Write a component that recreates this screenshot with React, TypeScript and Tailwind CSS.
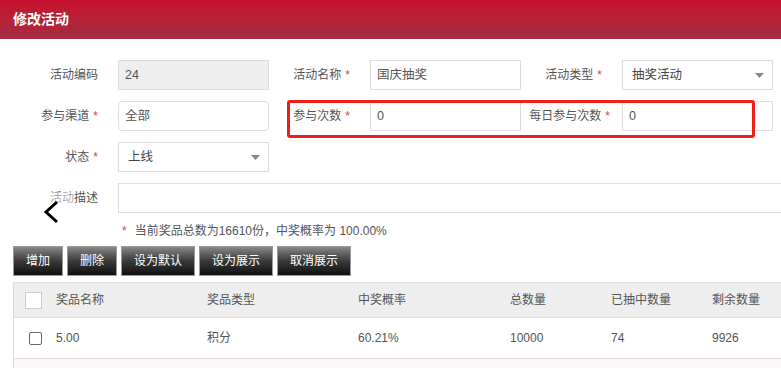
import React from "react";

const FONT = { fontFamily: '"Liberation Sans", "Noto Sans CJK SC", sans-serif' };

function Star() {
  return <span className="text-[#e4393c] ml-[4px]">*</span>;
}

function Label({ text, star, w = "w-[101px]", pr = "pr-[20px]" }: { text: string; star?: boolean; w?: string; pr?: string }) {
  return (
    <div className={`${w} ${pr} shrink-0 text-right text-[12px] text-[#555] leading-[30px] whitespace-nowrap`}>
      {text}
      {star && <Star />}
    </div>
  );
}

function Input({ value, gray, rounded }: { value: string; gray?: boolean; rounded?: boolean }) {
  return (
    <div
      className={`w-[151px] h-[30px] shrink-0 border border-[#ddd] pl-[6px] text-[12.5px] text-[#555] leading-[28px] ${
        gray ? "bg-[#eee]" : "bg-white"
      } ${rounded ? "rounded-[4px] border-[#d6d6d6]" : ""}`}
    >
      {value}
    </div>
  );
}

function Select({ value }: { value: string }) {
  return (
    <div className="relative w-[151px] h-[30px] shrink-0 border border-[#ddd] bg-white pl-[9px] text-[12.5px] text-[#444] leading-[28px]">
      {value}
      <svg className="absolute right-[8px] top-[12px]" width="9" height="5" viewBox="0 0 9 5">
        <polygon points="0,0 9,0 4.5,5" fill="#888" />
      </svg>
    </div>
  );
}

function Btn({ text, wide }: { text: string; wide?: boolean }) {
  return (
    <div
      className={`${wide ? "w-[74px]" : "w-[50px]"} h-[30px] border border-[#9a9a9a] bg-gradient-to-b from-[#888] via-[#3a3a3a] to-[#111] text-white text-[12px] leading-[28px] text-center`}
    >
      {text}
    </div>
  );
}

export default function App() {
  const cols = ["w-[151px]", "w-[151px]", "w-[152px]", "w-[101px]", "w-[101px]", "w-[101px]"];
  const head = ["奖品名称", "奖品类型", "中奖概率", "总数量", "已抽中数量", "剩余数量"];
  const row = ["5.00", "积分", "60.21%", "10000", "74", "9926"];
  return (
    <div className="relative w-[781px] h-[368px] overflow-hidden bg-white" style={FONT}>
      <div className="h-[39px] bg-gradient-to-b from-[#c8102e] to-[#a42a40] flex items-center pl-[13px]">
        <span className="text-white text-[14px] font-bold">修改活动</span>
      </div>

      <div className="pt-[21px] flex flex-col gap-[11px]">
        <div className="flex items-center h-[30px]">
          <Label text="活动编码" w="w-[118px]" />
          <Input value="24" gray />
          <Label text="活动名称" star />
          <Input value="国庆抽奖" />
          <Label text="活动类型" star />
          <Select value="抽奖活动" />
        </div>
        <div className="flex items-center h-[30px]">
          <Label text="参与渠道" star w="w-[118px]" />
          <Input value="全部" rounded />
          <Label text="参与次数" star />
          <Input value="0" />
          <Label text="每日参与次数" star pr="pr-[12px]" />
          <Input value="0" />
        </div>
        <div className="flex items-center h-[30px]">
          <Label text="状态" star w="w-[118px]" />
          <Select value="上线" />
        </div>
        <div className="flex items-center h-[30px]">
          <Label text="活动描述" w="w-[118px]" />
          <div className="w-[700px] h-[30px] shrink-0 border border-[#ddd] bg-white" />
        </div>
      </div>

      <div className="mt-[8px] h-[20px] pl-[122px] flex items-center text-[12px] text-[#555] whitespace-nowrap">
        <span className="text-[#e4393c] mr-[8px]">*</span>
        当前奖品总数为16610份，中奖概率为 100.00%
      </div>

      <div className="mt-[5px] ml-[13px] flex gap-[4px]">
        <Btn text="增加" />
        <Btn text="删除" />
        <Btn text="设为默认" wide />
        <Btn text="设为展示" wide />
        <Btn text="取消展示" wide />
      </div>

      <div className="mt-[6px] ml-[13px] w-[900px] border-l border-t border-[#ddd] text-[12px] text-[#555]">
        <div className="flex items-center h-[35px] bg-[#eee] border-b border-[#ddd]">
          <div className="w-[42px] shrink-0 pl-[11px]">
            <div className="w-[17px] h-[17px] bg-white border border-[#ccc]" />
          </div>
          {head.map((h, i) => (
            <div key={h} className={`${cols[i]} shrink-0`}>
              {h}
            </div>
          ))}
        </div>
        <div className="flex items-center h-[41px] bg-white border-b border-[#ddd]">
          <div className="w-[42px] shrink-0 pl-[15px]">
            <div className="w-[13px] h-[13px] bg-white border border-[#666] rounded-[2px]" />
          </div>
          {row.map((h, i) => (
            <div key={i} className={`${cols[i]} shrink-0`}>
              {h}
            </div>
          ))}
        </div>
        <div className="h-[30px] bg-[#fbf7f7]" />
      </div>

      {/* highlight box */}
      <div className="absolute left-[287px] top-[100px] w-[468px] h-[38px] border-[3px] border-[#f01e1a] rounded-[3px]" />

      {/* back chevron overlay */}
      <div className="absolute left-[42px] top-[192px] w-[32px] h-[32px] bg-white/50" />
      <svg className="absolute left-[42px] top-[200px]" width="18" height="24" viewBox="0 0 18 24">
        <polyline points="15,2 4,12 15,22" fill="none" stroke="#000" strokeWidth="3" />
      </svg>
    </div>
  );
}
